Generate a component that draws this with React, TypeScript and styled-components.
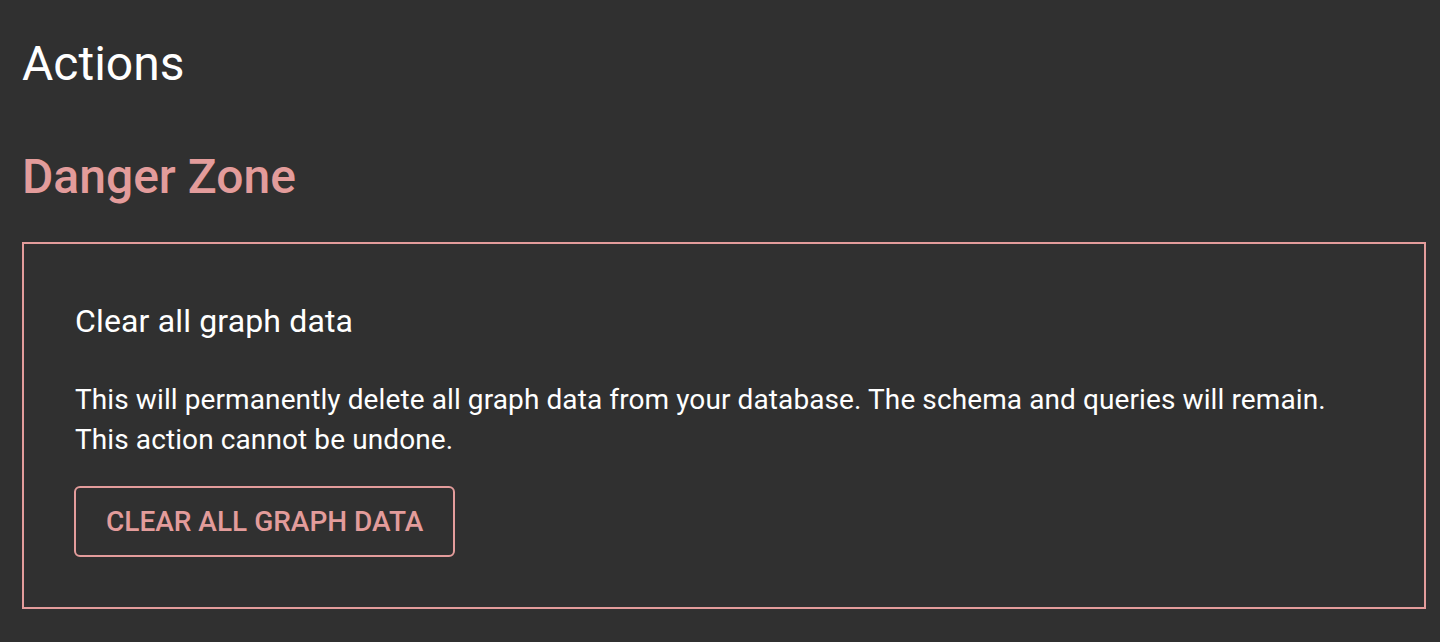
import React from "react";
import styled, { createGlobalStyle } from "styled-components";

const Global = createGlobalStyle`
  html, body { margin: 0; padding: 0; background: #303030; }
  body { font-family: Roboto, "Noto Sans", sans-serif; color: #ffffff; }
`;

const Page = styled.div`
  padding: 35px 14px 0 22px;
  min-height: 642px;
  box-sizing: border-box;
  background: #303030;
`;

const PageTitle = styled.h1`
  margin: 0;
  font-size: 48px;
  font-weight: 400;
  line-height: 58px;
  color: #ffffff;
`;

const SectionTitle = styled.h2`
  margin: 55px 0 0;
  font-size: 48px;
  font-weight: 500;
  line-height: 58px;
  color: #e39c9b;
`;

const DangerBox = styled.section`
  margin-top: 36px;
  border: 2px solid #e39c9b;
  padding: 58px 50px 50px 51px;
  display: flex;
  flex-direction: column;
  align-items: flex-start;
`;

const ItemTitle = styled.h3`
  margin: 0;
  font-size: 32px;
  font-weight: 400;
  line-height: 38px;
  letter-spacing: 0.15px;
  color: #ffffff;
`;

const Description = styled.p`
  margin: 40px 0 0;
  font-size: 28px;
  line-height: 40px;
  letter-spacing: 0.1px;
  color: #ffffff;
`;

const OutlineButton = styled.button`
  margin: 26px 0 0 -1px;
  height: 71px;
  padding: 0 30px;
  background: transparent;
  border: 2px solid #e39c9b;
  border-radius: 6px;
  color: #e39c9b;
  font-family: Roboto, "Noto Sans", sans-serif;
  font-size: 28px;
  font-weight: 500;
  text-transform: uppercase;
  letter-spacing: 0;
  cursor: pointer;
`;

export default function App() {
  return (
    <>
      <Global />
      <Page>
        <PageTitle>Actions</PageTitle>
        <SectionTitle>Danger Zone</SectionTitle>
        <DangerBox>
          <ItemTitle>Clear all graph data</ItemTitle>
          <Description>
            This will permanently delete all graph data from your database. The schema and queries will remain.
            <br />
            This action cannot be undone.
          </Description>
          <OutlineButton>Clear all graph data</OutlineButton>
        </DangerBox>
      </Page>
    </>
  );
}
